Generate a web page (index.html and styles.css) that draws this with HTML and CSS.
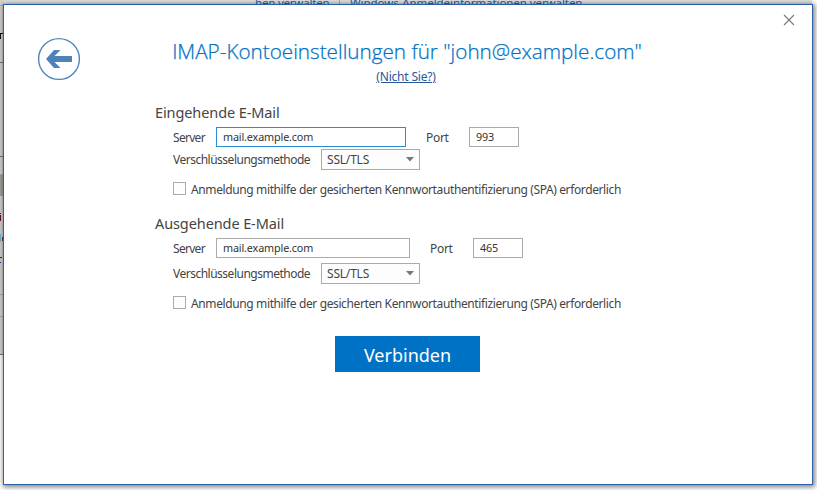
FILE: index.html
```html
<!DOCTYPE html>
<html lang="de">
<head>
<meta charset="utf-8">
<title>IMAP-Kontoeinstellungen</title>
<link rel="stylesheet" href="styles.css">
</head>
<body>
<div class="backdrop" aria-hidden="true">
  <div class="toolbar"><span class="tool-a">hen verwalten</span><span class="divider"></span><span class="tool-b">Windows-Anmeldeinformationen verwalten</span></div>
  <svg class="edge" width="4" height="360" viewBox="0 0 4 360">
    <rect width="4" height="355" fill="#d5d4d3"/>
    <path d="M0 5.5H4M0 174.5H4M0 294.5H4M0 316.5H4" stroke="#aaa"/>
    <path d="M0 62.5H4M0 156.5H4M0 354.5H4" stroke="#777"/>
    <rect y="175" width="4" height="21" fill="#a6a39e"/>
    <path d="M0 33.5H3M.5 33V39" stroke="#111"/>
    <path d="M.5 215V221M0 213.5H1M0 257.5H2" stroke="#6a0c38"/>
    <path d="M.5 234V242" stroke="#69bce2"/>
    <path d="M2.5 237V241" stroke="#7a3510"/>
    <path d="M0 262.5H1" stroke="#1c2c92"/>
  </svg>
</div>
<main class="dialog">
  <button class="back" aria-label="Zurück">
    <svg width="44" height="44" viewBox="0 0 44 44"><circle cx="22" cy="22" r="20.4" fill="none" stroke="#5086bd" stroke-width="1.4"/><path d="M9 22 17 13H23.5L17.5 19H35V25H17.5L23.5 31H17Z" fill="#4e83ba"/></svg>
  </button>
  <button class="close" aria-label="Schließen">
    <svg width="12" height="12" viewBox="0 0 12 12"><path d="M1 1 11 11M11 1 1 11" stroke="#777" stroke-width="1.1"/></svg>
  </button>
  <header class="head">
    <h1>IMAP-Kontoeinstellungen für "john@example.com"</h1>
    <a class="not-you">(Nicht Sie?)</a>
  </header>
  <section class="group">
    <h2>Eingehende E-Mail</h2>
    <div class="row server">
      <span class="label">Server</span><div class="field host active">mail.example.com</div>
      <span class="port-label">Port</span><div class="field port">993</div>
    </div>
    <div class="row method"><span class="method-label">Verschlüsselungsmethode</span><div class="select"><span>SSL/TLS</span><svg width="8" height="5" viewBox="0 0 8 5"><path d="M0 0H8L4 4.5Z" fill="#777"/></svg></div></div>
    <div class="row check"><span class="box"></span><span class="check-label">Anmeldung mithilfe der gesicherten Kennwortauthentifizierung (SPA) erforderlich</span></div>
  </section>
  <section class="group outgoing">
    <h2>Ausgehende E-Mail</h2>
    <div class="row server">
      <span class="label">Server</span><div class="field host">mail.example.com</div>
      <span class="port-label">Port</span><div class="field port">465</div>
    </div>
    <div class="row method"><span class="method-label">Verschlüsselungsmethode</span><div class="select"><span>SSL/TLS</span><svg width="8" height="5" viewBox="0 0 8 5"><path d="M0 0H8L4 4.5Z" fill="#777"/></svg></div></div>
    <div class="row check"><span class="box"></span><span class="check-label">Anmeldung mithilfe der gesicherten Kennwortauthentifizierung (SPA) erforderlich</span></div>
  </section>
  <button class="connect">Verbinden</button>
</main>
</body>
</html>
```
FILE: styles.css
```css
* { box-sizing: border-box; }
body {
  margin: 0;
  width: 817px;
  height: 490px;
  overflow: hidden;
  position: relative;
  background: #fff;
  font-family: "Noto Sans", "Open Sans", sans-serif;
  font-size: 12px;
  color: #444;
}
button { border: 0; padding: 0; background: none; font-family: inherit; }
svg { display: block; }
.backdrop { position: absolute; inset: 0; }
.toolbar {
  display: flex;
  width: 812px;
  height: 16px;
  margin-top: -5px;
  padding-left: 255px;
  background: #e0e0e0;
  color: #2561a8;
  white-space: nowrap;
  font-size: 11.5px;
  line-height: 16px;
}
.tool-a { width: 84px; letter-spacing: -0.2px; }
.toolbar .divider { width: 1px; margin-right: 10px; background: #aaa; }
.tool-b { letter-spacing: -0.07px; }
.edge { position: absolute; left: 0; top: 0; }
.dialog {
  position: relative;
  top: 4px;
  left: 3px;
  width: 810px;
  height: 481px;
  padding: 32px 151px 0;
  background: #fff;
  border: 1px solid #2b5fa8;
  box-shadow: 1px 1px 5px 1px rgba(0, 0, 0, 0.5);
}
.back { position: absolute; left: 33px; top: 32px; }
.close { position: absolute; left: 779px; top: 9px; }
.head { display: flex; flex-direction: column; align-items: center; height: 64px; padding-right: 2px; }
h1 {
  margin: 0;
  font-family: "Open Sans", sans-serif;
  font-size: 20.7px;
  font-weight: 300;
  line-height: 28px;
  color: #0072c6;
  white-space: nowrap;
  -webkit-text-stroke: 0.25px #0072c6;
}
.not-you { margin: 4px 2px 0 0; line-height: 16px; color: #2b579a; text-decoration: underline; letter-spacing: -0.2px; }
.group { height: 111px; }
h2 { margin: 0; font-size: 14.5px; font-weight: 400; line-height: 22px; white-space: nowrap; letter-spacing: -0.1px; }
.row { display: flex; align-items: center; padding-left: 18px; white-space: nowrap; }
.server { height: 20px; margin-top: 4px; }
.label { width: 43px; letter-spacing: -0.7px; }
.field { height: 20px; border: 1px solid #ababab; padding-left: 6px; line-height: 18px; font-size: 10.8px; letter-spacing: -0.15px; color: #333; }
.host { width: 190px; }
.active { border-color: #2a8dd4; }
.port-label { width: 43px; margin-left: 20px; letter-spacing: -0.3px; }
.port { width: 50px; }
.method { height: 21px; margin-top: 2px; }
.method-label { width: 148px; letter-spacing: -0.5px; }
.select { display: flex; align-items: center; justify-content: space-between; width: 99px; height: 21px; padding: 0 5px; border: 1px solid #ababab; background: #fdfdfd; letter-spacing: -0.2px; }
.check { height: 16px; margin-top: 11px; }
.box { width: 13px; height: 13px; margin: -2px 5px 0 0; border: 1px solid #ababab; background: #fdfdfd; }
.check-label { letter-spacing: -0.38px; }
.outgoing .host { width: 194px; }
.outgoing .method { margin-top: 5px; }
.connect { display: block; width: 145px; height: 36px; margin: 13px 0 0 180px; padding-top: 2px; background: #0072c6; color: #fff; font-size: 18px; }
```
